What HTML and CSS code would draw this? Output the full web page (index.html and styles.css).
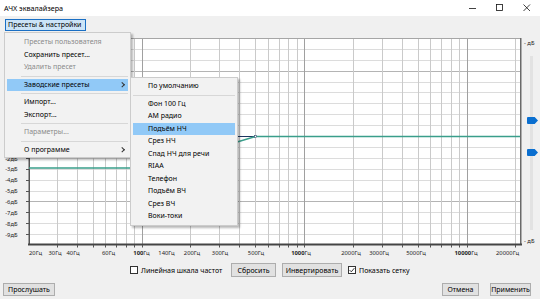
FILE: index.html
```html
<!DOCTYPE html>
<html lang="ru">
<head>
    <meta charset="UTF-8">
    <title>АЧХ эквалайзера</title>
    <link rel="stylesheet" href="styles.css">
</head>
<body>
<div class="window">
    <header class="titlebar">
        <span class="title">АЧХ эквалайзера</span>
        <div class="caption">
            <span class="caption-btn"><svg width="8" height="8" viewBox="0 0 8 8"><line x1="0" y1="4.5" x2="7" y2="4.5" stroke="#111" stroke-width="0.8"/></svg></span>
            <span class="caption-btn"><svg width="8" height="8" viewBox="0 0 8 8"><rect x="0.5" y="0.5" width="6" height="6" fill="none" stroke="#111" stroke-width="0.8"/></svg></span>
            <span class="caption-btn"><svg width="8" height="8" viewBox="0 0 8 8"><path d="M0.5 0.5 L7 7 M7 0.5 L0.5 7" stroke="#111" stroke-width="0.8"/></svg></span>
        </div>
    </header>

    <div class="toolbar">
        <button class="menu-button active">Пресеты &amp; настройки</button>
    </div>

    <div class="chart-row">
        <svg class="chart" width="523" height="229" viewBox="0 32 523 229">
            <rect x="29" y="38" width="492" height="206" fill="#fff"/>
            <g stroke="#dcdcdc" stroke-width="1">
                <line x1="29" y1="49.5" x2="521" y2="49.5"/>
                <line x1="29" y1="60.5" x2="521" y2="60.5"/>
                <line x1="29" y1="82.5" x2="521" y2="82.5"/>
                <line x1="29" y1="92.5" x2="521" y2="92.5"/>
                <line x1="29" y1="103.5" x2="521" y2="103.5"/>
                <line x1="29" y1="114.5" x2="521" y2="114.5"/>
                <line x1="29" y1="125.5" x2="521" y2="125.5"/>
                <line x1="29" y1="147.5" x2="521" y2="147.5"/>
                <line x1="29" y1="158.5" x2="521" y2="158.5"/>
                <line x1="29" y1="169.5" x2="521" y2="169.5"/>
                <line x1="29" y1="180.5" x2="521" y2="180.5"/>
                <line x1="29" y1="191.5" x2="521" y2="191.5"/>
                <line x1="29" y1="212.5" x2="521" y2="212.5"/>
                <line x1="29" y1="223.5" x2="521" y2="223.5"/>
                <line x1="29" y1="234.5" x2="521" y2="234.5"/>
            </g>
            <g stroke="#b4b4b4" stroke-width="1">
                <line x1="29" y1="71.5" x2="521" y2="71.5"/>
                <line x1="29" y1="136.5" x2="521" y2="136.5"/>
                <line x1="29" y1="201.5" x2="521" y2="201.5"/>
            </g>
            <g stroke="#cacaca" stroke-width="1">
                <line x1="57.5" y1="38" x2="57.5" y2="244"/>
                <line x1="77.5" y1="38" x2="77.5" y2="244"/>
                <line x1="93.5" y1="38" x2="93.5" y2="244"/>
                <line x1="105.5" y1="38" x2="105.5" y2="244"/>
                <line x1="116.5" y1="38" x2="116.5" y2="244"/>
                <line x1="126.5" y1="38" x2="126.5" y2="244"/>
                <line x1="134.5" y1="38" x2="134.5" y2="244"/>
                <line x1="190.5" y1="38" x2="190.5" y2="244"/>
                <line x1="219.5" y1="38" x2="219.5" y2="244"/>
                <line x1="239.5" y1="38" x2="239.5" y2="244"/>
                <line x1="255.5" y1="38" x2="255.5" y2="244"/>
                <line x1="268.5" y1="38" x2="268.5" y2="244"/>
                <line x1="279.5" y1="38" x2="279.5" y2="244"/>
                <line x1="288.5" y1="38" x2="288.5" y2="244"/>
                <line x1="297.5" y1="38" x2="297.5" y2="244"/>
                <line x1="353.5" y1="38" x2="353.5" y2="244"/>
                <line x1="382.5" y1="38" x2="382.5" y2="244"/>
                <line x1="402.5" y1="38" x2="402.5" y2="244"/>
                <line x1="418.5" y1="38" x2="418.5" y2="244"/>
                <line x1="430.5" y1="38" x2="430.5" y2="244"/>
                <line x1="441.5" y1="38" x2="441.5" y2="244"/>
                <line x1="451.5" y1="38" x2="451.5" y2="244"/>
                <line x1="459.5" y1="38" x2="459.5" y2="244"/>
                <line x1="515.5" y1="38" x2="515.5" y2="244"/>
            </g>
            <g stroke="#a0a0a0" stroke-width="1">
                <line x1="142.5" y1="38" x2="142.5" y2="244"/>
                <line x1="304.5" y1="38" x2="304.5" y2="244"/>
                <line x1="467.5" y1="38" x2="467.5" y2="244"/>
            </g>

            <!-- frame -->
            <line x1="29" y1="38.5" x2="521" y2="38.5" stroke="#a6a6a6" stroke-width="1"/>
            <line x1="520.75" y1="38" x2="520.75" y2="245" stroke="#6a6a6a" stroke-width="1.5"/>
            <line x1="29.25" y1="38" x2="29.25" y2="245" stroke="#555" stroke-width="1.5"/>
            <line x1="28" y1="244.5" x2="522" y2="244.5" stroke="#444" stroke-width="2"/>

            <!-- ticks -->
            <g stroke="#555" stroke-width="1">
                <line x1="26" y1="49.5" x2="29" y2="49.5"/><line x1="26" y1="60.5" x2="29" y2="60.5"/>
                <line x1="26" y1="71.5" x2="29" y2="71.5"/><line x1="26" y1="82.5" x2="29" y2="82.5"/>
                <line x1="26" y1="92.5" x2="29" y2="92.5"/><line x1="26" y1="103.5" x2="29" y2="103.5"/>
                <line x1="26" y1="114.5" x2="29" y2="114.5"/><line x1="26" y1="125.5" x2="29" y2="125.5"/>
                <line x1="26" y1="136.5" x2="29" y2="136.5"/><line x1="26" y1="147.5" x2="29" y2="147.5"/>
                <line x1="26" y1="158.5" x2="29" y2="158.5"/><line x1="26" y1="169.5" x2="29" y2="169.5"/>
                <line x1="26" y1="180.5" x2="29" y2="180.5"/><line x1="26" y1="191.5" x2="29" y2="191.5"/>
                <line x1="26" y1="201.5" x2="29" y2="201.5"/><line x1="26" y1="212.5" x2="29" y2="212.5"/>
                <line x1="26" y1="223.5" x2="29" y2="223.5"/><line x1="26" y1="234.5" x2="29" y2="234.5"/>
                <line x1="57.5" y1="245" x2="57.5" y2="247.5"/><line x1="77.5" y1="245" x2="77.5" y2="247.5"/>
                <line x1="93.5" y1="245" x2="93.5" y2="247.5"/><line x1="105.5" y1="245" x2="105.5" y2="247.5"/>
                <line x1="116.5" y1="245" x2="116.5" y2="247.5"/><line x1="126.5" y1="245" x2="126.5" y2="247.5"/>
                <line x1="134.5" y1="245" x2="134.5" y2="247.5"/><line x1="142.5" y1="245" x2="142.5" y2="247.5"/>
                <line x1="190.5" y1="245" x2="190.5" y2="247.5"/><line x1="219.5" y1="245" x2="219.5" y2="247.5"/>
                <line x1="239.5" y1="245" x2="239.5" y2="247.5"/><line x1="255.5" y1="245" x2="255.5" y2="247.5"/>
                <line x1="268.5" y1="245" x2="268.5" y2="247.5"/><line x1="279.5" y1="245" x2="279.5" y2="247.5"/>
                <line x1="288.5" y1="245" x2="288.5" y2="247.5"/><line x1="297.5" y1="245" x2="297.5" y2="247.5"/>
                <line x1="304.5" y1="245" x2="304.5" y2="247.5"/><line x1="353.5" y1="245" x2="353.5" y2="247.5"/>
                <line x1="382.5" y1="245" x2="382.5" y2="247.5"/><line x1="402.5" y1="245" x2="402.5" y2="247.5"/>
                <line x1="418.5" y1="245" x2="418.5" y2="247.5"/><line x1="430.5" y1="245" x2="430.5" y2="247.5"/>
                <line x1="441.5" y1="245" x2="441.5" y2="247.5"/><line x1="451.5" y1="245" x2="451.5" y2="247.5"/>
                <line x1="459.5" y1="245" x2="459.5" y2="247.5"/><line x1="467.5" y1="245" x2="467.5" y2="247.5"/>
                <line x1="515.5" y1="245" x2="515.5" y2="247.5"/>
            </g>

            <!-- response curves -->
            <polyline points="130,136.5 255.5,136.5" fill="none" stroke="#1e3760" stroke-width="1.2"/>
            <polyline points="29,168 150,168 255.5,136.5 520,136.5" fill="none" stroke="#3a9e8b" stroke-width="1.6"/>
            <rect x="254.5" y="135.5" width="2" height="2" fill="#fff" stroke="#1e3760" stroke-width="0.5"/>

            <!-- dB labels -->
            <g class="axis-label" text-anchor="end">
                <text x="17.5" y="61.3">7дБ</text>
                <text x="17.5" y="72.3">6дБ</text>
                <text x="17.5" y="83.3">5дБ</text>
                <text x="17.5" y="94.3">4дБ</text>
                <text x="17.5" y="105.3">3дБ</text>
                <text x="17.5" y="116.3">2дБ</text>
                <text x="17.5" y="127.3">1дБ</text>
                <text x="17.5" y="138.3">0дБ</text>
                <text x="17.5" y="149.3">-1дБ</text>
                <text x="17.5" y="160.5">-2дБ</text>
                <text x="17.5" y="171.3">-3дБ</text>
                <text x="17.5" y="182.2">-4дБ</text>
                <text x="17.5" y="193.1">-5дБ</text>
                <text x="17.5" y="204">-6дБ</text>
                <text x="17.5" y="214.9">-7дБ</text>
                <text x="17.5" y="225.8">-8дБ</text>
                <text x="17.5" y="236.7">-9дБ</text>
            </g>

            <!-- frequency labels -->
            <g class="axis-label" text-anchor="middle">
                <text x="29" y="255" text-anchor="start">20Гц</text>
                <text x="55" y="255">30Гц</text>
                <text x="73" y="255">40Гц</text>
                <text x="108.5" y="255">60Гц</text>
                <text x="141.5" y="255"><tspan font-weight="bold">100</tspan>Гц</text>
                <text x="166.5" y="255">140Гц</text>
                <text x="192" y="255">200Гц</text>
                <text x="220" y="255">300Гц</text>
                <text x="256" y="255">500Гц</text>
                <text x="301" y="255"><tspan font-weight="bold">1000</tspan>Гц</text>
                <text x="351" y="255">2000Гц</text>
                <text x="379" y="255">3000Гц</text>
                <text x="416" y="255">5000Гц</text>
                <text x="466" y="255"><tspan font-weight="bold">10000</tspan>Гц</text>
                <text x="507.5" y="255">20000Гц</text>
            </g>
        </svg>

        <div class="gain">
            <span class="gain-label">- дБ</span>
            <div class="gain-track">
                <span class="thumb thumb-low"></span>
                <span class="thumb thumb-high"></span>
            </div>
            <span class="gain-label">- дБ</span>
        </div>
    </div>

    <div class="options">
        <label class="check check-linear"><span class="box"></span>Линейная шкала частот</label>
        <button class="btn btn-reset">Сбросить</button>
        <button class="btn btn-invert">Инвертировать</button>
        <label class="check"><span class="box checked"><svg width="6" height="6" viewBox="0 0 6 6"><polyline points="0.6,3.1 2.3,4.8 5.4,1.1" fill="none" stroke="#222" stroke-width="0.9"/></svg></span>Показать сетку</label>
    </div>

    <div class="footer">
        <button class="btn btn-listen">Прослушать</button>
        <div class="footer-right">
            <button class="btn btn-cancel">Отмена</button>
            <button class="btn btn-apply">Применить</button>
        </div>
    </div>

    <!-- open dropdown menu -->
    <div class="menu">
        <div class="menu-item disabled">Пресеты пользователя</div>
        <div class="menu-item">Сохранить пресет...</div>
        <div class="menu-item disabled">Удалить пресет</div>
        <div class="menu-sep"></div>
        <div class="menu-item selected has-sub">Заводские пресеты</div>
        <div class="menu-sep"></div>
        <div class="menu-item">Импорт...</div>
        <div class="menu-item">Экспорт...</div>
        <div class="menu-sep"></div>
        <div class="menu-item disabled">Параметры...</div>
        <div class="menu-sep"></div>
        <div class="menu-item has-sub">О программе</div>
    </div>

    <div class="submenu">
        <div class="menu-item">По умолчанию</div>
        <div class="menu-sep"></div>
        <div class="menu-item">Фон 100 Гц</div>
        <div class="menu-item">AM радио</div>
        <div class="menu-item selected">Подъём НЧ</div>
        <div class="menu-item">Срез НЧ</div>
        <div class="menu-item">Спад НЧ для речи</div>
        <div class="menu-item">RIAA</div>
        <div class="menu-item">Телефон</div>
        <div class="menu-item">Подъём ВЧ</div>
        <div class="menu-item">Срез ВЧ</div>
        <div class="menu-item">Воки-токи</div>
    </div>
</div>
</body>
</html>
```

FILE: styles.css
```css
body {
    margin: 0;
    font-family: "Noto Sans", "Open Sans", sans-serif;
    font-size: 7px;
    color: #000;
    background-color: #f0f0f0;
}
.window {
    position: relative;
    width: 540px;
    height: 299px;
    overflow: hidden;
    background-color: #f0f0f0;
}
.titlebar {
    height: 16px;
    display: flex;
    align-items: center;
    justify-content: space-between;
    padding-left: 4px;
    background-color: #fff;
}
.title {
    font-size: 7.2px;
}
.caption {
    display: flex;
    height: 100%;
}
.caption-btn {
    width: 27px;
    display: flex;
    align-items: center;
    justify-content: center;
}
.toolbar {
    height: 16px;
    box-sizing: border-box;
    padding: 3px 0 0 5px;
}
.menu-button {
    height: 12px;
    width: 81px;
    padding: 0 0 0 2px;
    text-align: left;
    white-space: nowrap;
    font: inherit;
    line-height: 10px;
    border: 1px solid #1a6fc4;
    background-color: #cce4f7;
}
.chart-row {
    height: 229px;
    display: flex;
}
.chart {
    display: block;
}
.axis-label {
    font-size: 5.8px;
    fill: #222;
}
.gain {
    width: 17px;
    display: flex;
    flex-direction: column;
    padding: 7px 0 16px;
    box-sizing: border-box;
}
.gain-label {
    height: 8px;
    line-height: 8px;
    font-size: 5.8px;
    padding-left: 1px;
    color: #222;
}
.gain-track {
    flex: 1;
    margin: 9px 0 7px 7px;
    width: 3px;
    background-color: #e2e2e2;
    position: relative;
}
.thumb {
    position: absolute;
    left: -3px;
    width: 11px;
    height: 7px;
    background-color: #0a6fd0;
    clip-path: polygon(0 0, 70% 0, 100% 50%, 70% 100%, 0 100%);
    border-radius: 1px;
}
.thumb-low {
    top: 61px;
}
.thumb-high {
    top: 93px;
}
.options {
    height: 18px;
    display: flex;
    align-items: center;
    padding-left: 130px;
    gap: 6px;
}
.check {
    display: flex;
    align-items: center;
    gap: 3px;
    white-space: nowrap;
}
.check-linear {
    width: 95px;
}
.box {
    width: 8px;
    height: 8px;
    box-sizing: border-box;
    border: 1px solid #333;
    background-color: #fff;
    display: flex;
    align-items: center;
    justify-content: center;
}
.btn {
    height: 14px;
    padding: 0;
    font: inherit;
    color: #000;
    background-color: #e1e1e1;
    border: 1px solid #adadad;
}
.btn-reset {
    width: 45px;
}
.btn-invert {
    width: 60px;
}
.footer {
    display: flex;
    justify-content: space-between;
    padding: 4px 9px 0 3px;
}
.footer .btn {
    height: 13px;
}
.footer-right {
    display: flex;
    gap: 11px;
}
.btn-listen {
    width: 52px;
}
.btn-cancel {
    width: 37px;
}
.btn-apply {
    width: 41px;
}
/* dropdown menus */
.menu, .submenu {
    position: absolute;
    background-color: #f2f2f2;
    border: 1px solid #cccccc;
    box-shadow: 2px 2px 2px rgba(0, 0, 0, 0.28);
}
.menu {
    left: 4px;
    top: 32px;
    width: 125px;
    padding: 3px 0 1px;
}
.submenu {
    left: 130px;
    top: 77px;
    width: 106px;
    padding: 2px 0 2.5px;
}
.menu-item {
    height: 12.5px;
    line-height: 12.5px;
    margin: 0 2px;
    padding-left: 17px;
    position: relative;
    white-space: nowrap;
}
.submenu .menu-item {
    padding-left: 15px;
}
.menu-item.disabled {
    color: #8a8a8a;
}
.menu-item.selected {
    background-color: #91c9f7;
}
.menu-item.has-sub::after {
    content: "";
    position: absolute;
    right: 5px;
    top: 4.5px;
    width: 2.5px;
    height: 2.5px;
    border-right: 0.8px solid #333;
    border-bottom: 0.8px solid #333;
    transform: rotate(-45deg);
}
.menu-sep {
    height: 5px;
    display: flex;
    align-items: center;
    padding-left: 16px;
}
.menu-sep::after {
    content: "";
    flex: 1;
    height: 1px;
    margin-right: 2px;
    background-color: #d7d7d7;
}
.submenu .menu-sep {
    padding-left: 2px;
}
```
